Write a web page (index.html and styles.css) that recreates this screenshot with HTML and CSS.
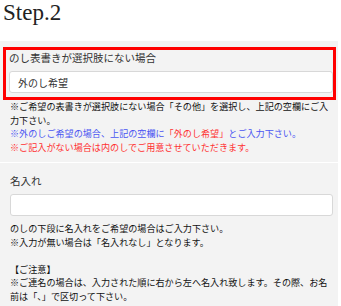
FILE: index.html
```html
<!DOCTYPE html>
<html lang="ja">
  <head>
    <meta charset="UTF-8" />
    <title>Step.2</title>
    <link rel="stylesheet" href="styles.css">
  </head>
  <body>
    <h1 class="step">Step.2</h1>

    <div class="section">
      <div class="highlight">
        <label class="label">のし表書きが選択肢にない場合</label>
        <input class="field" type="text" value="外のし希望" />
      </div>
      <p class="note">
        ※ご希望の表書きが選択肢にない場合「その他」を選択し、上記の空欄にご入力下さい。<br />
        <span class="blue">※外のしご希望の場合、上記の空欄に<span class="red">「外のし希望」</span>とご入力下さい。</span><br />
        <span class="red">※ご記入がない場合は内のしでご用意させていただきます。</span>
      </p>
    </div>

    <div class="section section-name">
      <label class="label">名入れ</label>
      <input class="field" type="text" value="" />
      <p class="note note-name">
        のしの下段に名入れをご希望の場合はご入力下さい。<br />
        ※入力が無い場合は「名入れなし」となります。<br />
        <br />
        【ご注意】<br />
        ※ご連名の場合は、入力された順に右から左へ名入れ致します。その際、お名前は「、」で区切って下さい。
      </p>
    </div>
  </body>
</html>
```

FILE: styles.css
```css
html {
  font-family: "Noto Sans CJK JP", sans-serif;
}
body {
  margin: 0;
  background-color: #fff;
  color: #222;
}
.step {
  margin: 0;
  padding: 1px 0 0 3px;
  height: 41px;
  box-sizing: border-box;
  font-family: "Liberation Serif", serif;
  font-weight: normal;
  font-size: 23px;
  line-height: 23px;
  color: #222;
}
.section {
  background-color: #f3f3f3;
  margin-right: 3px;
  margin-bottom: 1px;
  padding: 6px 6px 8px 10px;
}
.highlight {
  border: 3px solid #ff0000;
  margin: 0 -4px 0 -7px;
  padding: 1px 0 4px 3px;
}
.label {
  display: block;
  font-size: 10.5px;
  line-height: 14px;
  color: #333;
}
.field {
  display: block;
  width: 100%;
  height: 22px;
  box-sizing: border-box;
  margin: 6px 0 0 0;
  padding: 0 8px;
  border: 1px solid #d8d8d8;
  border-radius: 3px;
  background-color: #fff;
  font-family: "Noto Sans CJK JP", sans-serif;
  font-size: 10px;
  color: #333;
  outline: none;
}
.note {
  margin: 0;
  font-size: 9.1px;
  line-height: 13.5px;
  color: #111;
}
.blue {
  color: #4a55f2;
}
.red {
  color: #ff3030;
}
.section-name {
  padding-top: 11px;
  padding-bottom: 10px;
}
.section-name .field {
  width: calc(100% + 1px);
}
.note-name {
  margin-top: 6px;
}
```
